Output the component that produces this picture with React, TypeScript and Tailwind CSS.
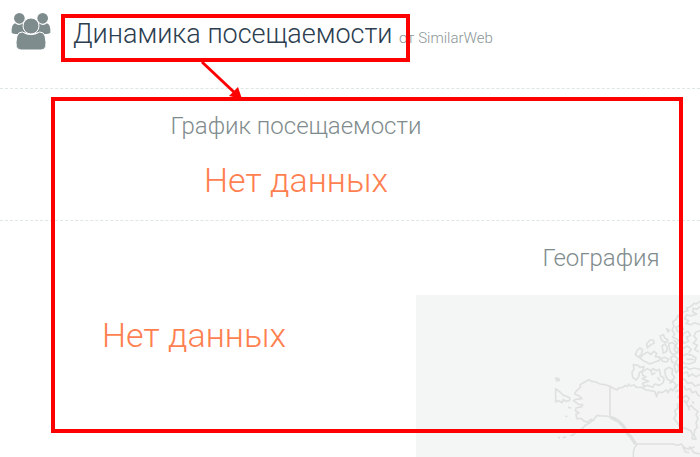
import React from "react";

const coast = [
  // Alaska and the northern mainland shore
  "M182 378 L172 376 L166 382 L160 392 L152 388 L142 397 L132 393 L124 386 L110 386 L108 372 L117 368 L106 362 L108 354 L126 350 L128 344 L116 343 L100 332 L108 328 L126 326 L118 318 L104 312 L108 304 L122 291 L120 284 L134 276 L147 269 L154 274 L168 276 L180 282 L196 284 L210 289 L222 296 L232 300 L236 294 L248 292 L256 286 L262 290 L266 282 L272 288 L282 285 L290 292 L304 292 L318 300 L330 302 L344 304 L350 320 L354 306 L366 308 L380 300 L384 308 L392 296 L398 302 L410 290 L414 282",
  "M210 289 V381",
  "M182 378 L198 378 L210 381 L226 384 L236 396 L248 406 L254 420 L266 432 L274 446 L284 456 L290 464 L284 472 L280 486 L280 501",
  "M288 462 H400 L412 466 L424 462 L432 472 L444 478 L452 474 L462 488 L480 492",
  // Bering Strait and the Aleutians
  "M47 296 L60 306 L70 316 L78 318 L90 324 L88 332 L76 334 L70 328 L66 338 L56 332 L47 336 Z",
  "M47 264 L56 266 L58 271 L50 272 Z",
  "M84 352 L94 354 M76 378 L82 380 M54 442 L60 444 M68 443 L78 441 M92 437 L104 432",
  "M104 430 L116 424 L128 414 L138 404 L150 398 L160 388",
  // Victoria and Banks islands
  "M280 224 L294 226 L300 232 L312 230 L308 242 L298 248 L296 260 L288 270 L278 262 L276 246 L282 238 Z",
  "M306 246 L322 236 L334 242 L340 236 L350 242 L358 238 L362 258 L372 264 L370 278 L358 286 L344 282 L338 292 L322 286 L312 290 L308 280 L326 274 L306 266 L318 260 L308 256 Z",
  "M332 238 L336 254 L346 248 M352 262 L360 272",
  // Parry islands
  "M286 194 L292 180 L300 174 L308 180 L304 192 L296 202 Z",
  "M300 204 L312 192 L324 186 L332 194 L342 184 L350 190 L346 200 L360 202 L358 212 L344 216 L330 222 L318 216 L310 212 Z",
  "M320 162 L330 150 L340 150 L342 160 L330 166 L322 174 Z",
  "M360 138 L370 134 L374 144 L384 150 L378 158 L366 152 Z",
  "M366 168 L374 162 L382 172 L380 184 L370 190 Z",
  "M386 160 L398 158 L408 166 L402 178 L410 190 L398 194 L390 184 Z",
  "M380 116 L388 122 L384 126 Z",
  "M362 206 L374 202 L386 208 L380 216 L368 214 Z",
  "M392 202 L404 198 L414 206 L406 220 L396 216 Z",
  "M374 240 L386 232 L398 238 L396 252 L404 262 L394 274 L382 268 L376 254 Z",
  "M402 226 L414 222 L416 240 L408 248 Z",
  "M388 280 L400 274 L408 284 L402 296",
  // Ellesmere and Devon islands
  "M480 34 L468 42 L462 40 L452 50 L440 54 L444 62 L430 66 L424 78 L414 76 L408 88 L398 96 L402 108 L396 120 L404 132 L398 142 L412 148 L420 158",
  "M480 50 L470 58 L460 54 L458 66 L470 72 L452 78 L440 74 L434 86 L446 92 L438 100 L452 104 L464 98 L480 104",
  "M408 112 L420 106 L430 116 L424 128 L412 124 Z",
  "M430 130 L444 124 L452 136 L440 142 L446 154 L432 160 L426 148 Z",
  "M480 122 L468 126 L462 138 L470 148 L460 160 L472 166 L464 178 L476 186",
  "M400 150 L412 160 L404 170 L418 178 L410 186 L428 192",
  "M426 198 L440 192 L456 196 L468 204 L464 216 L448 222 L432 220 L426 212 Z",
  "M440 208 H462 M428 176 L442 168 L454 178 L446 188",
  // Baffin Island
  "M426 236 L438 230 L448 238 L464 234 L480 238 M430 250 L442 246 L446 260 L456 252 L468 260 L480 254",
  "M420 264 L434 268 L442 280 L456 278 L464 288 L480 284 M432 288 L438 300 L450 296 L456 308 L468 304 L474 316 L480 318",
  "M406 306 L418 300 L424 310 L414 322 L428 324 L438 316 L448 326 L440 338 L430 334",
  // Hudson Bay
  "M412 340 L414 354 L404 362 L408 374 L402 386 L412 398 L420 412 L440 416 L452 422 L458 434 L456 446 L468 448 L462 434 L464 420 L472 412 L468 398 L474 386 L468 374 L474 364 L462 356 L454 346 L446 352 L440 342 L434 330",
  "M444 356 L450 360 M456 334 L462 340 M428 468 L436 486 L448 488 M446 470 L456 474 L464 470",
];

function PeopleIcon() {
  return (
    <svg viewBox="0 0 120 114" className="h-[38px] w-10 shrink-0" aria-hidden="true">
      <g fill="#7f8c8d">
        <circle cx="25" cy="19" r="16" />
        <circle cx="95" cy="19" r="16" />
        <path d="M12 34Q24 44 36 34L46 62Q36 60 28 66Q5 67 2 62Q0 40 12 34Z" />
        <path d="M108 34Q96 44 84 34L74 62Q84 60 92 66Q115 67 118 62Q120 40 108 34Z" />
      </g>
      <g fill="#7f8c8d" stroke="#fff" strokeWidth="3">
        <path d="M34 60Q60 76 86 60Q99 60 102 72Q107 92 104 104Q101 114 90 114H30Q19 114 16 104Q13 92 18 72Q21 60 34 60Z" />
        <circle cx="60" cy="42" r="24" />
      </g>
    </svg>
  );
}

function RegionMap() {
  return (
    <svg
      viewBox="-372 15 852 486"
      preserveAspectRatio="xMinYMin slice"
      className="block h-[162px] w-full bg-[#f4f6f6]"
      role="img"
      aria-label="География"
    >
      <path
        d="M210 289L147 269L108 304L126 326L108 328L128 346L106 362L110 386L142 397L182 378L236 396L290 464L280 501H480V238L414 282L350 310Z"
        fill="#f4f4f4"
      />
      <g fill="none" stroke="#dfe0e0" strokeWidth="5" strokeLinejoin="round">
        {coast.map((d) => (
          <path key={d} d={d} />
        ))}
        <path d="M212 382L236 394L250 408L262 430L274 442L286 462" strokeWidth="10" />
      </g>
    </svg>
  );
}

function NoData() {
  return <p className="text-[34px] leading-10 text-[#ff7f50]">Нет данных</p>;
}

export default function App() {
  return (
    <main className="relative overflow-hidden bg-white font-['Roboto',sans-serif] font-light text-[#7f8c8d]">
      <header className="flex h-[89px] items-start gap-[22px] border-b border-dashed border-[#dfe6e6] pt-3 pl-[11px]">
        <PeopleIcon />
        <h1 className="text-[27px] leading-11 whitespace-nowrap text-[#2c3e50]">
          Динамика посещаемости <small className="text-[15px] text-[#8a9596]">от SimilarWeb</small>
        </h1>
      </header>

      <section className="flex h-[132px] w-full flex-col items-center gap-[18px] border-b border-dashed border-[#dfe6e6] pt-[21px] pr-[108px]">
        <h2 className="text-2xl leading-8">График посещаемости</h2>
        <NoData />
      </section>

      <section className="grid grid-cols-[416px_1fr]">
        <div className="flex items-center justify-center pr-7 pb-2">
          <NoData />
        </div>
        <div>
          <h2 className="py-5 pl-[86px] text-center text-2xl leading-[34px]">География</h2>
          <RegionMap />
        </div>
      </section>

      <div className="pointer-events-none absolute top-3.5 left-[61px] h-12 w-[349px] border-4 border-[#fe0000]" />
      <div className="pointer-events-none absolute top-[97px] left-[51px] h-[336px] w-[632px] border-4 border-[#fe0000]" />
      <svg
        viewBox="0 0 44 40"
        className="pointer-events-none absolute top-[60px] left-[200px] h-10 w-11"
        aria-hidden="true"
      >
        <path d="M2 2L36 34" stroke="#fe0000" strokeWidth="3" />
        <path d="M42 39L29 36L38 27Z" fill="#fe0000" />
      </svg>
    </main>
  );
}
